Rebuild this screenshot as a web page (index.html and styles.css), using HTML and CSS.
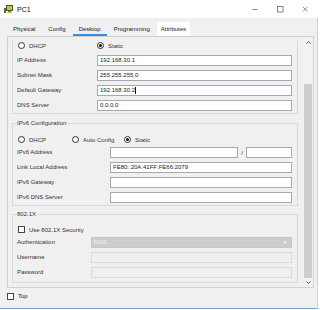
FILE: index.html
```html
<!DOCTYPE html>
<html lang="en">
<head>
    <meta charset="UTF-8">
    <title>PC1</title>
    <link rel="stylesheet" href="styles.css">
</head>
<body>
<div class="window">
    <div class="titlebar">
        <svg class="appIcon" width="10" height="10" viewBox="0 0 10 10">
            <rect x="0" y="4" width="2" height="5" fill="#7a5a2a"/>
            <rect x="2" y="1" width="7" height="6" fill="#3d5a2a"/>
            <rect x="3" y="2" width="5" height="4" fill="#b8cf3e"/>
            <rect x="4" y="7" width="3" height="1" fill="#8a8a4a"/>
            <rect x="3" y="8" width="5" height="1" fill="#d2b640"/>
        </svg>
        <span class="title">PC1</span>
        <div class="controls">
            <div class="ctrl"><svg width="7" height="7" viewBox="0 0 7 7"><rect x="0.5" y="3" width="5" height="0.8" fill="#666"/></svg></div>
            <div class="ctrl"><svg width="7" height="7" viewBox="0 0 7 7"><rect x="0.5" y="0.5" width="5.5" height="5.5" fill="none" stroke="#666" stroke-width="0.8"/></svg></div>
            <div class="ctrl"><svg width="7" height="7" viewBox="0 0 7 7"><path d="M1 1L5.5 5.5M5.5 1L1 5.5" stroke="#666" stroke-width="0.7"/></svg></div>
        </div>
    </div>

    <div class="main">
        <div class="tabs">
            <div class="tab">Physical</div>
            <div class="tab">Config</div>
            <div class="tab active">Desktop</div>
            <div class="tab">Programming</div>
            <div class="tab hover">Attributes</div>
        </div>

        <div class="panel">
            <div class="content">
                <!-- IPv4 (scrolled, top cut off) -->
                <div class="group ipv4">
                    <div class="opts">
                        <div class="opt w79"><span class="radio"></span>DHCP</div>
                        <div class="opt"><span class="radio on"></span>Static</div>
                    </div>
                    <div class="row first v4">
                        <div class="label">IP Address</div>
                        <div class="field">192.168.30.1</div>
                    </div>
                    <div class="row v4">
                        <div class="label">Subnet Mask</div>
                        <div class="field">255.255.255.0</div>
                    </div>
                    <div class="row v4">
                        <div class="label">Default Gateway</div>
                        <div class="field focus">192.168.30.2<span class="caret"></span></div>
                    </div>
                    <div class="row v4">
                        <div class="label">DNS Server</div>
                        <div class="field">0.0.0.0</div>
                    </div>
                </div>

                <div class="group ipv6">
                    <div class="legend">IPv6 Configuration</div>
                    <div class="opts">
                        <div class="opt w54"><span class="radio"></span>DHCP</div>
                        <div class="opt w52"><span class="radio"></span>Auto Config</div>
                        <div class="opt"><span class="radio on"></span>Static</div>
                    </div>
                    <div class="row first v6">
                        <div class="label">IPv6 Address</div>
                        <div class="field prefix"></div>
                        <div class="slash">/</div>
                        <div class="field"></div>
                    </div>
                    <div class="row v6">
                        <div class="label">Link Local Address</div>
                        <div class="field">FE80::20A:41FF:FE66:2079</div>
                    </div>
                    <div class="row v6">
                        <div class="label">IPv6 Gateway</div>
                        <div class="field"></div>
                    </div>
                    <div class="row v6">
                        <div class="label">IPv6 DNS Server</div>
                        <div class="field"></div>
                    </div>
                </div>

                <div class="group dot1x">
                    <div class="legend">802.1X</div>
                    <div class="opts check">
                        <div class="opt"><span class="box"></span>Use 802.1X Security</div>
                    </div>
                    <div class="row first x">
                        <div class="label">Authentication</div>
                        <div class="field select">MD5<span class="arrow"></span></div>
                    </div>
                    <div class="row x">
                        <div class="label">Username</div>
                        <div class="field off"></div>
                    </div>
                    <div class="row x">
                        <div class="label">Password</div>
                        <div class="field off"></div>
                    </div>
                </div>
            </div>

            <div class="scrollbar">
                <div class="sbtn up"><svg width="5" height="3" viewBox="0 0 5 3"><path d="M0.5 2.5L2.5 0.5L4.5 2.5" fill="none" stroke="#555" stroke-width="1"/></svg></div>
                <div class="thumb"></div>
                <div class="sbtn down"><svg width="5" height="3" viewBox="0 0 5 3"><path d="M0.5 0.5L2.5 2.5L4.5 0.5" fill="none" stroke="#555" stroke-width="1"/></svg></div>
            </div>
        </div>

        <div class="footer">
            <span class="box"></span>Top
        </div>
    </div>
</div>
</body>
</html>
```

FILE: styles.css
```css
body{
    margin: 0;
    background: #fff;
    font-family: "Liberation Sans", Arial, sans-serif;
    font-size: 6px;
    color: #333;
}
.window{
    width: 318px;
}
.titlebar{
    height: 18px;
    display: flex;
    align-items: center;
    background: #fff;
}
.appIcon{
    margin-left: 4px;
}
.title{
    margin-left: 3px;
    font-size: 7px;
    color: #111;
}
.controls{
    margin-left: auto;
    display: flex;
}
.ctrl{
    width: 25px;
    height: 16px;
    display: flex;
    align-items: center;
    justify-content: center;
}

.main{
    height: 290px;
    background: #f0f0f0;
    border-right: 1px solid #c3d3e6;
    border-bottom: 1px solid #7aa5d8;
}
.tabs{
    display: flex;
    height: 14px;
    padding: 4px 0 0 7px;
}
.tab{
    padding: 0 6px;
    margin-right: 1px;
    line-height: 14px;
    color: #222;
}
.tab.active{
    box-shadow: inset 0 -2px 0 #3a8ee0;
}
.tab.hover{
    background: #fff;
    padding: 0 4px;
}

.panel{
    margin-left: 7px;
    width: 307px;
    height: 252px;
    box-sizing: border-box;
    border: 1px solid #d0d0d0;
    display: flex;
    overflow: hidden;
}
.content{
    flex: 1;
    padding: 0 5px 0 4px;
}

.group{
    border: 1px solid #d9d9d9;
    padding: 0 5px 2px 4px;
}
.ipv4{
    border-top: none;
}
.ipv6{
    margin-top: 9px;
}
.dot1x{
    margin-top: 8px;
    padding-bottom: 4px;
}
.legend{
    display: table;
    margin: -5px 0 0 -1px;
    padding: 0 1px;
    line-height: 8px;
    background: #f0f0f0;
}

.opts{
    display: flex;
    align-items: center;
    height: 9px;
    padding-left: 1px;
}
.ipv4 .opts{
    margin-top: 4px;
}
.ipv6 .opts{
    margin-top: 8px;
}
.dot1x .opts{
    margin-top: 7px;
}
.opt{
    display: flex;
    align-items: center;
}
.w79{ width: 79px; }
.w54{ width: 54px; }
.w52{ width: 52px; }

.radio{
    width: 7px;
    height: 7px;
    box-sizing: border-box;
    border: 1px solid #333;
    border-radius: 50%;
    background: #fff;
    margin-right: 4px;
    display: flex;
    align-items: center;
    justify-content: center;
}
.radio.on::after{
    content: "";
    width: 3px;
    height: 3px;
    border-radius: 50%;
    background: #111;
}
.box{
    width: 7px;
    height: 7px;
    box-sizing: border-box;
    border: 1px solid #444;
    background: #fff;
    margin-right: 4px;
}

.row{
    display: flex;
    align-items: center;
    height: 11px;
    margin-top: 4px;
}
.row.first{
    margin-top: 3px;
}
.ipv4 .row.first{
    margin-top: 5px;
}
.label{
    line-height: 11px;
    white-space: nowrap;
}
.v4 .label{ width: 80px; }
.v6 .label{ width: 93px; }
.x .label{ width: 74px; }

.field{
    flex: 1;
    height: 11px;
    box-sizing: border-box;
    border: 1px solid #a8a8a8;
    background: #fff;
    padding-left: 2px;
    line-height: 9px;
    color: #222;
    display: flex;
    align-items: center;
}
.field.focus{
    border-color: #7fb0e6;
}
.caret{
    width: 1px;
    height: 7px;
    background: #111;
}
.field.prefix{
    flex: none;
    width: 128px;
}
.slash{
    width: 8px;
    text-align: center;
}
.field.select{
    position: relative;
    background: #cdcdcd;
    border-color: #c6c6c6;
    color: #eee;
}
.arrow{
    position: absolute;
    right: 4px;
    top: 3px;
    border-left: 2px solid transparent;
    border-right: 2px solid transparent;
    border-top: 3px solid #ececec;
}
.field.off{
    background: #f0f0f0;
    border-color: #dadada;
}

.scrollbar{
    width: 10px;
    display: flex;
    flex-direction: column;
    background: #f2f2f2;
}
.sbtn{
    display: flex;
    justify-content: center;
    align-items: center;
}
.sbtn.up{
    height: 11px;
}
.sbtn.down{
    height: 9px;
}
.thumb{
    height: 194px;
    margin: 36px 1px 0;
    background: #cdcdcd;
}

.footer{
    display: flex;
    align-items: center;
    padding: 5px 0 0 7px;
    height: 7px;
    line-height: 7px;
    color: #222;
}
```
